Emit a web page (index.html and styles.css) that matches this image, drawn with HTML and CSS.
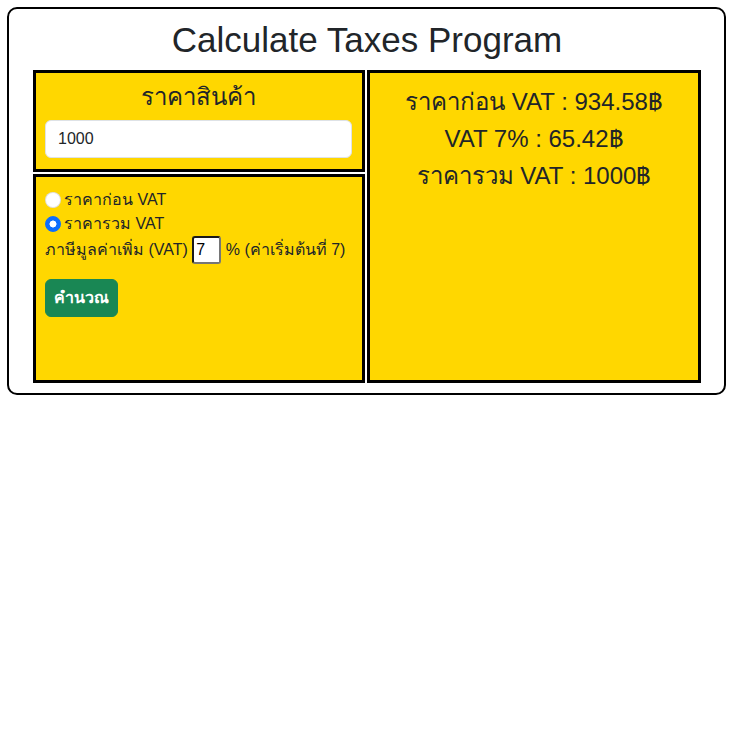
FILE: index.html
```html
<!DOCTYPE html>
<html lang="th">
<head>
<meta charset="utf-8">
<title>Calculate Taxes Program</title>
<link rel="stylesheet" href="styles.css">
</head>
<body>
<div class="card">
  <h1 class="title">Calculate Taxes Program</h1>
  <div class="grid">
    <div class="left">
      <div class="box box-price">
        <h4 class="box-heading">ราคาสินค้า</h4>
        <input class="price-input" type="text" value="1000">
      </div>
      <div class="box box-options">
        <div class="line"><span class="radio"></span><span class="label">ราคาก่อน VAT</span></div>
        <div class="line"><span class="radio checked"></span><span class="label">ราคารวม VAT</span></div>
        <div class="line">ภาษีมูลค่าเพิ่ม (VAT) <input class="vat-input" type="text" value="7"> % (ค่าเริ่มต้นที่ 7)</div>
        <button class="btn" type="button">คำนวณ</button>
      </div>
    </div>
    <div class="box box-result">
      <div class="result-line">ราคาก่อน VAT : 934.58฿</div>
      <div class="result-line">VAT 7% : 65.42฿</div>
      <div class="result-line">ราคารวม VAT : 1000฿</div>
    </div>
  </div>
</div>
</body>
</html>
```

FILE: styles.css
```css
html, body {
  margin: 0;
  padding: 0;
  background: #fff;
}
body {
  font-family: "Liberation Sans", Arial, sans-serif;
  font-size: 16px;
  line-height: 1.5;
  color: #212529;
}
.card {
  box-sizing: border-box;
  width: 719px;
  margin: 7px;
  border: 2px solid #000;
  border-radius: 10px;
  padding: 10px 23px 10px 24px;
}
.title {
  margin: 0 0 9px;
  font-size: 35px;
  font-weight: 500;
  line-height: 1.2;
  text-align: center;
  color: #212529;
}
.grid {
  display: grid;
  grid-template-columns: 332px 334px;
  column-gap: 2px;
}
.left {
  display: flex;
  flex-direction: column;
  gap: 2px;
}
.box {
  box-sizing: border-box;
  background: #ffd700;
  border: 3px solid #000;
}
.box-price {
  height: 102px;
  padding: 10px 10px 10px 9px;
}
.box-heading {
  margin: 0 0 8px;
  font-size: 24px;
  font-weight: 500;
  line-height: 1.2;
  text-align: center;
}
.price-input {
  display: block;
  box-sizing: border-box;
  width: 100%;
  height: 38px;
  padding: 6px 12px;
  font-family: inherit;
  font-size: 16px;
  line-height: 1.5;
  color: #212529;
  background: #fff;
  border: 1px solid #dee2e6;
  border-radius: 6px;
}
.box-options {
  flex: 1;
  padding: 11px 10px 10px 9px;
}
.line {
  line-height: 24px;
  height: 24px;
  white-space: nowrap;
}
.radio {
  display: inline-block;
  box-sizing: border-box;
  width: 16px;
  height: 16px;
  border-radius: 50%;
  background: #fff;
  border: 1px solid rgba(0, 0, 0, 0.12);
  vertical-align: -3px;
  margin-right: 3px;
}
.radio.checked {
  border-color: #0d6efd;
  background: radial-gradient(circle, #fff 0 3.2px, #0d6efd 3.8px);
}
.vat-input {
  box-sizing: border-box;
  width: 29px;
  height: 28px;
  padding: 1px 2px;
  font-family: inherit;
  font-size: 16px;
  color: #000;
  background: #fff;
  border: 2px solid;
  border-color: #1a1a1a #767676 #767676 #1a1a1a;
  border-radius: 3px;
  vertical-align: baseline;
}
.btn {
  display: block;
  margin-top: 19px;
  padding: 6px 8px;
  font-family: inherit;
  font-size: 16px;
  font-weight: 700;
  line-height: 24px;
  color: #fff;
  background: #198754;
  border: 1px solid #198754;
  border-radius: 6px;
}
.box-result {
  height: 313px;
  padding: 14px 10px 10px;
  text-align: center;
}
.result-line {
  font-size: 24px;
  line-height: 29px;
  margin-bottom: 8px;
}
```
